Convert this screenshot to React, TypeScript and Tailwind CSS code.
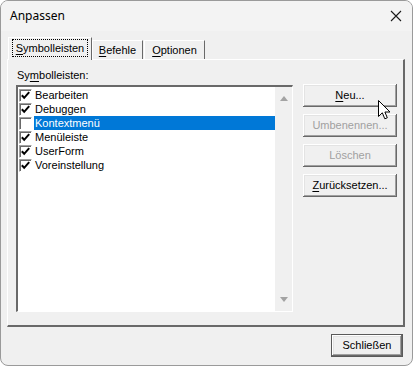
import React from "react";

const items = [
  { label: "Bearbeiten", checked: true },
  { label: "Debuggen", checked: true },
  { label: "Kontextmenü", checked: false, selected: true },
  { label: "Menüleiste", checked: true },
  { label: "UserForm", checked: true },
  { label: "Voreinstellung", checked: true },
];

const raised =
  "shadow-[inset_-1px_-1px_#696969,inset_1px_1px_#ffffff,inset_-2px_-2px_#a0a0a0,inset_2px_2px_#e3e3e3]";

function Checkbox({ checked }: { checked: boolean }) {
  return (
    <div className="w-[13px] h-[13px] bg-white border-t border-l border-[#a0a0a0] border-r border-b border-r-white border-b-white shadow-[inset_1px_1px_#696969] flex items-center justify-center">
      {checked && (
        <svg width="11" height="11" viewBox="0 0 11 11">
          <path d="M1.8 5.2 L4.2 7.8 L9.2 2.2" fill="none" stroke="#000" strokeWidth="2" />
        </svg>
      )}
    </div>
  );
}

function Button({
  children,
  disabled,
  isDefault,
}: {
  children: React.ReactNode;
  disabled?: boolean;
  isDefault?: boolean;
}) {
  return (
    <div
      className={
        "w-[94px] h-[23px] flex items-center justify-center bg-[#f0f0f0] text-[11px] leading-none " +
        raised +
        (disabled ? " text-[#a0a0a0]" : " text-black") +
        (isDefault ? " outline outline-1 outline-[#696969]" : "")
      }
    >
      {children}
    </div>
  );
}

export default function App() {
  return (
    <div className="w-[413px] h-[366px] bg-white">
      <div
        className="relative w-[413px] h-[366px] rounded-[8px] border border-[#9a9a9a] bg-[#f0f0f0] overflow-hidden flex flex-col text-black"
        style={{ fontFamily: '"Liberation Sans", Arial, sans-serif' }}
      >
        {/* title bar */}
        <div className="h-[30px] bg-[#f3f3f3] flex items-center justify-between pl-[9px] pr-[9px]">
          <span className="text-[12px]" style={{ fontFamily: '"Noto Sans", "Liberation Sans", sans-serif' }}>
            Anpassen
          </span>
          <svg width="12" height="12" viewBox="0 0 12 12" className="mr-[1px]">
            <path d="M1 1 L11 11 M11 1 L1 11" stroke="#1a1a1a" strokeWidth="1.1" />
          </svg>
        </div>

        {/* tabs */}
        <div className="pl-[7px] pt-[6px] flex items-end h-[28px]">
          <div className="relative z-10 -mb-[1px] w-[84px] h-[23px] bg-[#f0f0f0] border-l border-t border-white border-r border-r-[#696969] flex items-start justify-center pt-[2px]">
            <span className="text-[11px] leading-[16px] px-[3px] outline outline-1 outline-dotted outline-black">
              <span className="underline underline-offset-2">S</span>ymbolleisten
            </span>
          </div>
          <div className="w-[51px] h-[19px] border-l border-t border-white border-r border-r-[#696969] flex items-center justify-center text-[11px]">
            <span>
              <span className="underline underline-offset-2">B</span>efehle
            </span>
          </div>
          <div className="ml-[1px] w-[61px] h-[19px] border-l border-t border-white border-r border-r-[#696969] flex items-center justify-center text-[11px]">
            <span>
              <span className="underline underline-offset-2">O</span>ptionen
            </span>
          </div>
        </div>

        {/* panel */}
        <div className="ml-[6px] w-[398px] h-[268px] border-t border-l border-white border-r-2 border-b-2 border-r-[#696969] border-b-[#696969] flex pl-[8px] pt-[9px]">
          <div className="flex flex-col">
            <div className="text-[11px] leading-[13px] pl-[1px]">
              Sy<span className="underline underline-offset-2">m</span>bolleisten:
            </div>
            <div className="mt-[3px] w-[277px] h-[227px] border-t-2 border-l-2 border-t-[#696969] border-l-[#696969] border-b border-r border-b-white border-r-white flex bg-white">
              <div className="flex-1 flex flex-col pt-[1px]">
                {items.map((it) => (
                  <div key={it.label} className="h-[14px] flex items-center pl-[1px]">
                    <Checkbox checked={it.checked} />
                    <div
                      className={
                        "ml-[2px] flex-1 h-[14px] flex items-center pl-[1px] text-[11px] " +
                        (it.selected ? "bg-[#0078d7] text-white" : "")
                      }
                    >
                      {it.label}
                    </div>
                  </div>
                ))}
              </div>
              <div className="w-[17px] bg-[#f0f0f0] flex flex-col items-center justify-between py-[9px]">
                <svg width="8" height="5" viewBox="0 0 8 5">
                  <path d="M0 5 L4 0 L8 5 Z" fill="#a3a3a3" />
                </svg>
                <svg width="8" height="5" viewBox="0 0 8 5">
                  <path d="M0 0 L8 0 L4 5 Z" fill="#a3a3a3" />
                </svg>
              </div>
            </div>
          </div>
          <div className="ml-[10px] mt-[15px] flex flex-col gap-[7px]">
            <Button>
              <span>
                <span className="underline underline-offset-2">N</span>eu...
              </span>
            </Button>
            <Button disabled>Umbenennen...</Button>
            <Button disabled>Löschen</Button>
            <Button>
              <span>
                <span className="underline underline-offset-2">Z</span>urücksetzen...
              </span>
            </Button>
          </div>
        </div>

        {/* footer */}
        <div className="flex justify-end pr-[9px] pt-[7px]">
          <div
            className={
              "w-[72px] h-[23px] flex items-center justify-center bg-[#f0f0f0] text-[11px] border border-[#5a5a5a] " +
              raised
            }
          >
            Schließen
          </div>
        </div>

        {/* mouse cursor */}
        <svg
          className="absolute left-[377px] top-[99px]"
          width="14"
          height="21"
          viewBox="0 0 14 21"
        >
          <path
            d="M0.5 0.5 L0.5 16.5 L4.3 12.8 L6.8 18.8 L9.3 17.8 L6.9 12 L12 12 Z"
            fill="#fff"
            stroke="#000"
            strokeWidth="1"
            strokeLinejoin="round"
          />
        </svg>
      </div>
    </div>
  );
}
